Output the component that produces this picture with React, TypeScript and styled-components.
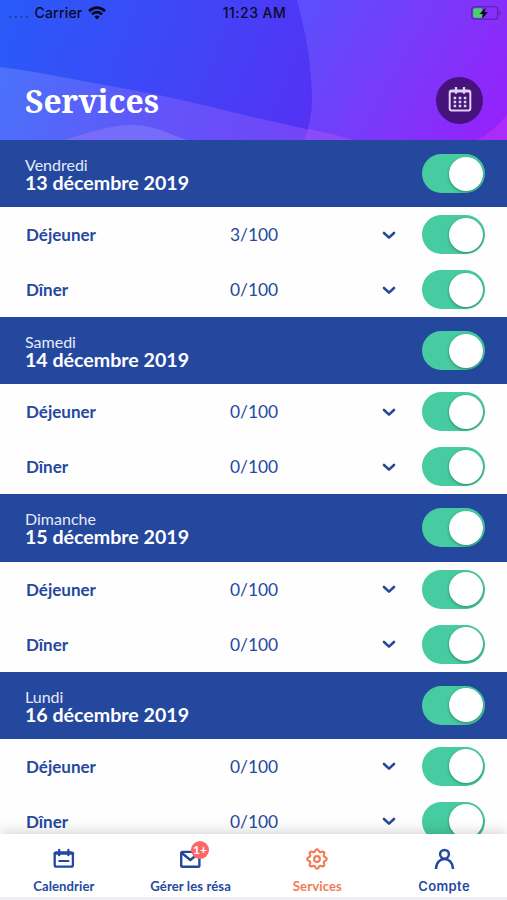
import React from "react";
import styled, { createGlobalStyle } from "styled-components";

const BLUE = "#25489f";
const ORANGE = "#f47b54";

const GlobalStyle = createGlobalStyle`
  * { box-sizing: border-box; }
  body { margin: 0; background: #fff; }
  button { font: inherit; border: 0; padding: 0; background: none; }
`;

const Screen = styled.div`
  width: 507px;
  height: 900px;
  display: flex;
  flex-direction: column;
  overflow: hidden;
  background: #fefefe;
  color: ${BLUE};
  font-family: Lato, sans-serif;
`;

const Header = styled.header`
  position: relative;
  flex: 0 0 140px;
  display: flex;
  flex-direction: column;
  overflow: hidden;
`;

const Backdrop = styled.svg`
  position: absolute;
  inset: 0;
`;

const StatusBar = styled.div`
  position: relative;
  height: 26px;
  padding: 0 6px 0 8px;
  display: grid;
  grid-template-columns: 1fr auto 1fr;
  align-items: center;
  color: #0b0a24;
  font: 500 14px/26px Inter, sans-serif;
`;

const Carrier = styled.div`
  display: flex;
  align-items: center;
  gap: 5.5px;
  letter-spacing: 0.2px;
`;

const Signal = styled.svg`
  margin-top: 8px;
`;

const Clock = styled.div`
  letter-spacing: 0.45px;
`;

const Battery = styled.svg`
  justify-self: end;
`;

const TitleRow = styled.div`
  position: relative;
  display: flex;
  align-items: center;
  justify-content: space-between;
  height: 46px;
  margin-top: 51px;
  padding: 0 24px 0 25px;
`;

const Title = styled.h1`
  margin: 0;
  padding-top: 1px;
  color: #fff;
  font: 700 31.8px/46px "Noto Serif", "Droid Serif", "DejaVu Serif Condensed", "DejaVu Serif", serif;
`;

const CalendarButton = styled.button`
  width: 47px;
  height: 47px;
  border-radius: 50%;
  background: #46127e;
  display: grid;
  place-items: center;
`;

const Days = styled.main`
  flex: 1;
  min-height: 0;
  overflow: hidden;
`;

const Day = styled.section`
  height: 177.2px;
`;

const DayHeader = styled.div`
  height: 67.2px;
  padding: 0 22px 0 25px;
  display: flex;
  align-items: center;
  justify-content: space-between;
  background: ${BLUE};
  color: #fff;
`;

const DateText = styled.div`
  display: flex;
  flex-direction: column;
  padding-top: 1px;
`;

const Weekday = styled.span`
  font-size: 16px;
  line-height: 18px;
  color: #e7ebf7;
`;

const FullDate = styled.strong`
  font-size: 19.6px;
  line-height: 18px;
  font-weight: 700;
`;

const ServiceRow = styled.div`
  height: 55px;
  padding: 0 22px 0 26px;
  display: grid;
  grid-template-columns: 204px 152px 1fr auto;
  align-items: center;
`;

const ServiceName = styled.span`
  font-weight: 700;
  font-size: 17px;
`;

const Count = styled.span`
  font-size: 17.4px;
`;

const Switch = styled.button`
  width: 63px;
  height: 39px;
  padding: 2px;
  border-radius: 20px;
  background: #46cca0;
  display: flex;
  justify-content: flex-end;
  align-items: center;
`;

const Knob = styled.span`
  width: 34px;
  height: 34px;
  border-radius: 50%;
  background: #fff;
  box-shadow: 0 1px 3px rgba(0, 70, 45, 0.5);
`;

const TabBar = styled.nav`
  position: relative;
  flex: 0 0 66px;
  display: grid;
  grid-template-columns: repeat(4, 1fr);
  background: #fff;
  border-bottom: 3px solid #f0f0f2;
  box-shadow: 0 -2px 12px rgba(0, 0, 0, 0.17);
`;

const Tab = styled.button<{ $active?: boolean; $inter?: boolean }>`
  display: flex;
  flex-direction: column;
  align-items: center;
  padding: 13px 0 0 1px;
  color: ${(p) => (p.$active ? ORANGE : BLUE)};
  && {
    font: ${(p) =>
      p.$inter ? "600 13px/17px Inter, sans-serif" : "700 13.1px/17px Lato, sans-serif"};
    letter-spacing: ${(p) => (p.$inter ? "0.4px" : "0.1px")};
  }
`;

const TabIcon = styled.span`
  position: relative;
  height: 24px;
  margin-bottom: 7px;
`;

const Badge = styled.span`
  position: absolute;
  left: 12.5px;
  top: -6px;
  width: 18px;
  height: 18px;
  border-radius: 50%;
  background: #fc6767;
  color: #fff;
  font: 700 12px/18px Lato, sans-serif;
  text-align: center;
`;

const HeaderArt = () => (
  <Backdrop width="507" height="140" viewBox="0 0 507 140" aria-hidden="true">
    <defs>
      <linearGradient id="base" gradientUnits="userSpaceOnUse" x1="0" y1="20" x2="350" y2="160">
        <stop offset="0" stopColor="#295af8" />
        <stop offset="0.5" stopColor="#4144f7" />
        <stop offset="1" stopColor="#5b2bf3" />
      </linearGradient>
      <linearGradient id="right" gradientUnits="userSpaceOnUse" x1="300" y1="10" x2="500" y2="125">
        <stop offset="0" stopColor="#5b4ffb" />
        <stop offset="0.5" stopColor="#793af9" />
        <stop offset="1" stopColor="#9422fb" />
      </linearGradient>
      <linearGradient id="slope" gradientUnits="userSpaceOnUse" x1="0" y1="70" x2="330" y2="140">
        <stop offset="0" stopColor="#4b71fb" />
        <stop offset="0.5" stopColor="#6254f8" />
        <stop offset="1" stopColor="#7641f9" />
      </linearGradient>
    </defs>
    <path fill="url(#base)" d="M0 0H507V140H0Z" />
    <path fill="url(#slope)" d="M0 67C35 71 70 79 116 87C165 95 210 107 253 117Q310 130 354 140H0Z" />
    <path fill="#776bf9" d="M64 140C90 132 110 125 133 125C154 125 169 134 187 140Z" />
    <path fill="url(#right)" d="M297 0C307 37 312 67 312 103Q311 123 304 140H507V0Z" />
    <path fill="#8c4af9" d="M308 129Q331 133 354 140H304Z" />
    <path fill="#ad2bf9" d="M507 114Q496 130 477 140H507Z" />
  </Backdrop>
);

const ChevronIcon = () => (
  <svg width="14" height="10" viewBox="0 0 14 10" fill="none" stroke={BLUE} strokeWidth="2.6" strokeLinecap="round" strokeLinejoin="round">
    <path d="M2 3L7 7.6L12 3" />
  </svg>
);

const Toggle = () => (
  <Switch role="switch" aria-checked="true">
    <Knob />
  </Switch>
);

const days = [
  { weekday: "Vendredi", date: "13 décembre 2019", lunch: "3/100", dinner: "0/100" },
  { weekday: "Samedi", date: "14 décembre 2019", lunch: "0/100", dinner: "0/100" },
  { weekday: "Dimanche", date: "15 décembre 2019", lunch: "0/100", dinner: "0/100" },
  { weekday: "Lundi", date: "16 décembre 2019", lunch: "0/100", dinner: "0/100" },
];

const Service = ({ name, count }: { name: string; count: string }) => (
  <ServiceRow>
    <ServiceName>{name}</ServiceName>
    <Count>{count}</Count>
    <ChevronIcon />
    <Toggle />
  </ServiceRow>
);

const gearPath = Array.from({ length: 64 }, (_, i) => {
  const a = (i / 64) * Math.PI * 2;
  const wave = Math.cos(a * 8);
  const r = 8.6 + 1.15 * Math.tanh(wave * 1.8);
  return `${i ? "L" : "M"}${(12 + r * Math.sin(a)).toFixed(2)} ${(12 - r * Math.cos(a)).toFixed(2)}`;
}).join("") + "Z";

export default function App() {
  return (
    <>
      <GlobalStyle />
      <Screen>
        <Header>
          <HeaderArt />
          <StatusBar>
            <Carrier>
              <Signal width="21" height="4" viewBox="0 0 21 4" fill="#29359c">
                <circle cx="2" cy="2" r="1.1" />
                <circle cx="7.7" cy="2" r="1.1" />
                <circle cx="13.3" cy="2" r="1.1" />
                <circle cx="19" cy="2" r="1.1" />
              </Signal>
              <span>Carrier</span>
              <svg width="18" height="14" viewBox="0 0 18 14" fill="none" stroke="#08071b" strokeWidth="2.7">
                <path d="M1 5.1Q9 -1.7 17 5.1" />
                <path d="M4 8.2Q9 4 14 8.2" />
                <path d="M6.3 10.6Q9 8.4 11.7 10.6L9 13.4Z" fill="#08071b" stroke="none" />
              </svg>
            </Carrier>
            <Clock>11:23 AM</Clock>
            <Battery width="30" height="14" viewBox="0 0 30 14">
              <rect x="0.7" y="0.7" width="26" height="12.6" rx="3" fill="none" stroke="#5225a2" strokeWidth="1.1" />
              <path d="M28.3 5V9Q29.5 8.5 29.5 7T28.3 5" fill="#5225a2" />
              <path d="M4 2.3H11V11.7H4Q2.2 11.7 2.2 9.8V4.2Q2.2 2.3 4 2.3Z" fill="#43d568" />
              <path d="M15 1.3L8.5 7.9H12L10.7 13L17.1 6.1H13.6Z" fill="#0b0921" stroke="#5e389f" strokeWidth="0.3" />
            </Battery>
          </StatusBar>
          <TitleRow>
            <Title>Services</Title>
            <CalendarButton aria-label="Choisir une date">
              <svg width="24" height="26" viewBox="0 0 24 26" fill="none" stroke="#ded5e9" strokeWidth="2">
                <rect x="1.7" y="3.5" width="20.6" height="20" rx="2" />
                <path d="M2 4.3H22M8 0V6.8M16 0V6.8" strokeWidth="2.3" />
                <path d="M5.6 11H18.4M5.6 15H18.4M5.6 19H18.4" strokeWidth="2.4" strokeDasharray="2.6 2.5" />
              </svg>
            </CalendarButton>
          </TitleRow>
        </Header>
        <Days>
          {days.map((day) => (
            <Day key={day.date}>
              <DayHeader>
                <DateText>
                  <Weekday>{day.weekday}</Weekday>
                  <FullDate>{day.date}</FullDate>
                </DateText>
                <Toggle />
              </DayHeader>
              <Service name="Déjeuner" count={day.lunch} />
              <Service name="Dîner" count={day.dinner} />
            </Day>
          ))}
        </Days>
        <TabBar>
          <Tab>
            <TabIcon>
              <svg width="24" height="24" viewBox="0 0 24 24" fill="none" stroke={BLUE} strokeWidth="2.3" strokeLinecap="round">
                <rect x="2.7" y="5.5" width="18.2" height="14.2" rx="1.8" />
                <path d="M3 6.3H20.7" strokeWidth="2.8" />
                <path d="M7.2 3V8.2M16.4 3V8.2" />
                <path d="M7.2 14H16.5" strokeWidth="2" />
              </svg>
            </TabIcon>
            <span>Calendrier</span>
          </Tab>
          <Tab>
            <TabIcon>
              <svg width="24" height="24" viewBox="0 0 24 24" fill="none" stroke={BLUE} strokeWidth="2.4" strokeLinejoin="round">
                <rect x="2.2" y="4.9" width="18.2" height="14.9" rx="1.3" />
                <path d="M2.8 6L11.3 13L20 6" />
              </svg>
              <Badge>1+</Badge>
            </TabIcon>
            <span>Gérer les résa</span>
          </Tab>
          <Tab $active>
            <TabIcon>
              <svg width="24" height="24" viewBox="0 0 24 24" fill="none" stroke={ORANGE} strokeWidth="2.1" strokeLinejoin="round">
                <path d={gearPath} />
                <circle cx="12" cy="12" r="2.9" />
              </svg>
            </TabIcon>
            <span>Services</span>
          </Tab>
          <Tab $inter>
            <TabIcon>
              <svg width="24" height="24" viewBox="0 0 24 24" fill="none" stroke={BLUE} strokeWidth="2.5">
                <circle cx="12.5" cy="7.3" r="4.4" />
                <path d="M3.9 22C4.6 8.6 20.4 8.6 21.1 22" />
              </svg>
            </TabIcon>
            <span>Compte</span>
          </Tab>
        </TabBar>
      </Screen>
    </>
  );
}
